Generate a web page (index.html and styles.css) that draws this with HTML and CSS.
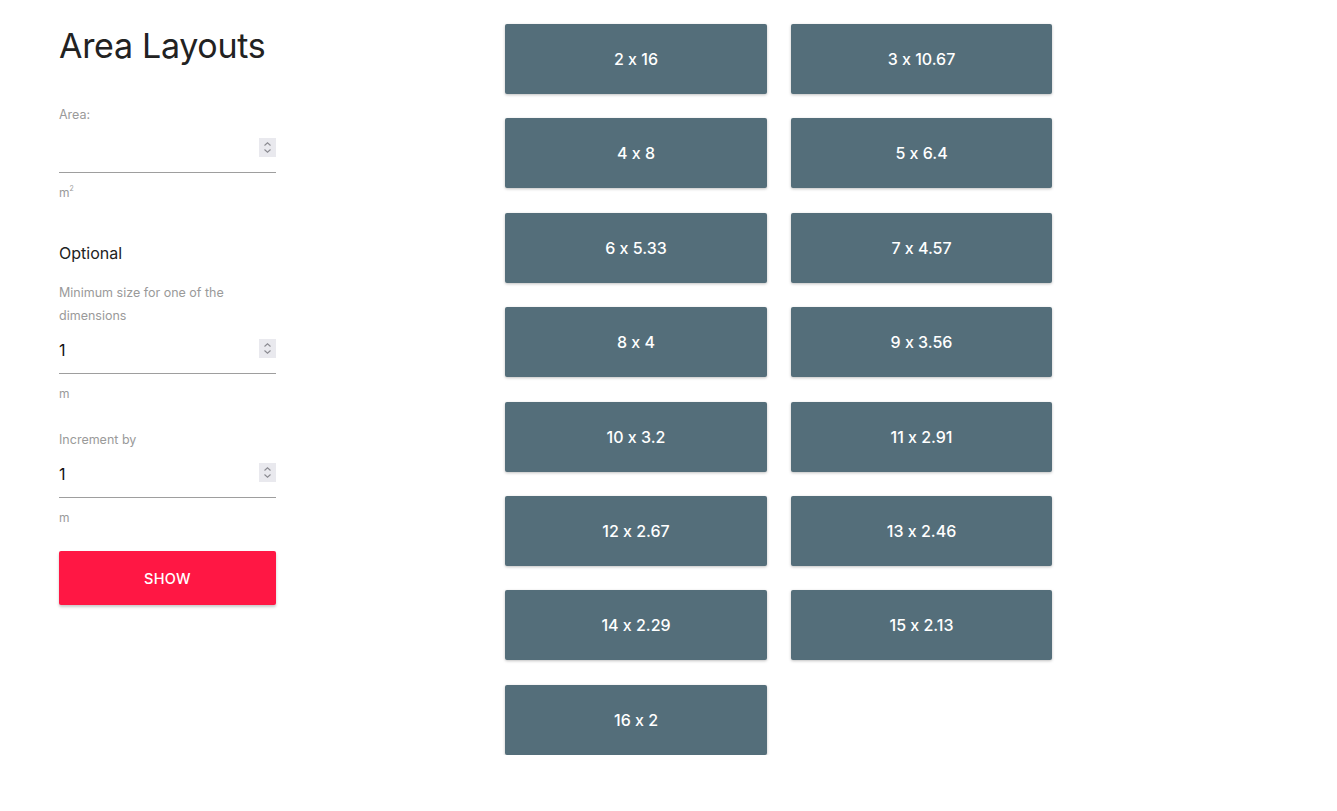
FILE: index.html
```html
<!DOCTYPE html>
<html>
<head>
<meta charset="utf-8">
<link rel="stylesheet" href="styles.css">
</head>
<body>
<div class="page">
  <aside class="panel">
    <h1 class="title">Area Layouts</h1>
    <div class="field">
      <label class="label">Area:</label>
      <div class="input-wrap">
        <input class="input" type="text" value="">
        <span class="spin"><svg width="9" height="13" viewBox="0 0 9 13"><path d="M1.5 4.5 L4.5 1.8 L7.5 4.5 M1.5 8.5 L4.5 11.2 L7.5 8.5" fill="none" stroke="#8a8a90" stroke-width="1.1"/></svg></span>
      </div>
      <div class="hint">m<sup class="sup">2</sup></div>
    </div>
    <h2 class="section">Optional</h2>
    <div class="field">
      <label class="label">Minimum size for one of the dimensions</label>
      <div class="input-wrap">
        <input class="input" type="text" value="1">
        <span class="spin"><svg width="9" height="13" viewBox="0 0 9 13"><path d="M1.5 4.5 L4.5 1.8 L7.5 4.5 M1.5 8.5 L4.5 11.2 L7.5 8.5" fill="none" stroke="#8a8a90" stroke-width="1.1"/></svg></span>
      </div>
      <div class="hint">m</div>
    </div>
    <div class="field">
      <label class="label">Increment by</label>
      <div class="input-wrap">
        <input class="input" type="text" value="1">
        <span class="spin"><svg width="9" height="13" viewBox="0 0 9 13"><path d="M1.5 4.5 L4.5 1.8 L7.5 4.5 M1.5 8.5 L4.5 11.2 L7.5 8.5" fill="none" stroke="#8a8a90" stroke-width="1.1"/></svg></span>
      </div>
      <div class="hint">m</div>
    </div>
    <button class="show">SHOW</button>
  </aside>
  <main class="grid">
    <button class="tile">2 x 16</button>
    <button class="tile">3 x 10.67</button>
    <button class="tile">4 x 8</button>
    <button class="tile">5 x 6.4</button>
    <button class="tile">6 x 5.33</button>
    <button class="tile">7 x 4.57</button>
    <button class="tile">8 x 4</button>
    <button class="tile">9 x 3.56</button>
    <button class="tile">10 x 3.2</button>
    <button class="tile">11 x 2.91</button>
    <button class="tile">12 x 2.67</button>
    <button class="tile">13 x 2.46</button>
    <button class="tile">14 x 2.29</button>
    <button class="tile">15 x 2.13</button>
    <button class="tile">16 x 2</button>
  </main>
</div>
</body>
</html>
```
FILE: styles.css
```css
* { box-sizing: border-box; }
html, body {
  margin: 0;
  background: #fff;
  font-family: Inter, "Noto Sans", "Liberation Sans", sans-serif;
  font-feature-settings: "calt" 0;
  color: #212121;
}
button, input {
  font-feature-settings: "calt" 0;
}
.page {
  display: flex;
  align-items: flex-start;
  padding-left: 59px;
}
.panel {
  width: 217px;
  padding-top: 26px;
  display: flex;
  flex-direction: column;
}
.title {
  margin: 0 0 37px;
  font-size: 34px;
  line-height: 40px;
  font-weight: 400;
  letter-spacing: -0.3px;
  color: #222;
}
.field {
  display: flex;
  flex-direction: column;
  margin-bottom: 25px;
}
.label {
  font-size: 12.5px;
  line-height: 23px;
  color: #9a9a9a;
}
.input-wrap {
  position: relative;
  height: 47px;
  border-bottom: 1px solid #9e9e9e;
}
.input {
  width: 100%;
  height: 100%;
  border: 0;
  outline: 0;
  padding: 0;
  font-family: inherit;
  font-size: 16px;
  color: #111;
  background: transparent;
}
.spin {
  position: absolute;
  right: 0;
  top: 12px;
  width: 17px;
  height: 19px;
  background: #e9e9ee;
  display: flex;
  align-items: center;
  justify-content: center;
}
.hint {
  margin-top: 11px;
  font-size: 12px;
  line-height: 18px;
  color: #9a9a9a;
}
.sup {
  font-size: 7px;
  vertical-align: 6px;
  line-height: 0;
}
.section {
  margin: 14px 0 16px;
  font-size: 16px;
  line-height: 24px;
  font-weight: 400;
  color: #222;
}
.show {
  margin-top: -1px;
  height: 54px;
  border: 0;
  border-radius: 2px;
  background: #ff1744;
  color: #fff;
  font-family: inherit;
  font-size: 14.5px;
  font-weight: 500;
  letter-spacing: 0.3px;
  box-shadow: 0 2px 3px rgba(0,0,0,0.22);
}
.grid {
  margin-left: 229px;
  padding-top: 24px;
  display: grid;
  grid-template-columns: 262px 261px;
  column-gap: 24px;
  row-gap: 24.4px;
  grid-auto-rows: 70px;
}
.tile {
  border: 0;
  border-radius: 2px;
  background: #546e7a;
  color: #fff;
  font-family: inherit;
  font-size: 16px;
  font-weight: 500;
  box-shadow: 0 1px 3px rgba(0,0,0,0.25);
}
```
